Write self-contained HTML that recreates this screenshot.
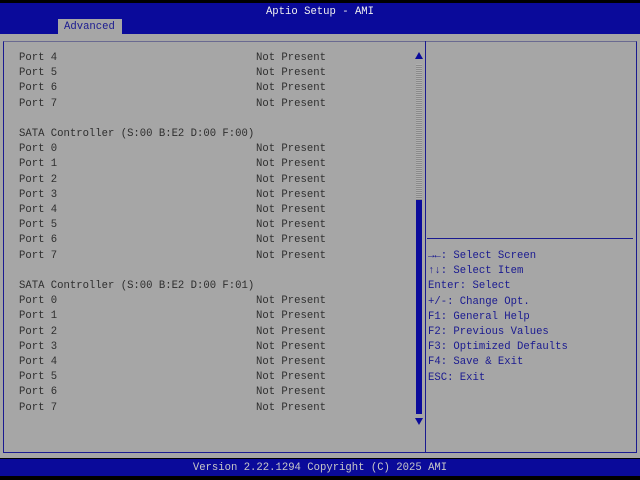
<!DOCTYPE html>
<html><head><style>
body{margin:0;width:640px;height:480px;background:#000;position:relative;overflow:hidden;font-family:"Liberation Mono","DejaVu Sans Mono",monospace;font-size:10.6px;}
div{position:absolute;}
.t{white-space:pre;line-height:12px;}
.l{color:#2e2e2e;}
.h{color:#1a1a90;}
</style></head><body>
<div style="left:0;top:3px;width:640px;height:31px;background:#0a0a9a"></div>
<div class="t" style="left:0;top:6px;width:640px;text-align:center;color:#f0f0f0">Aptio Setup - AMI</div>
<div style="left:58px;top:19px;width:64px;height:15px;background:#a6a6a6"></div>
<div class="t" style="left:64px;top:21px;color:#1a1a90">Advanced</div>
<div style="left:0;top:34px;width:640px;height:424px;background:#a6a6a6"></div>
<div style="left:3px;top:41px;width:632px;height:410px;border:1px solid #1a1a90;border-top-color:#6a6a90"></div>
<div style="left:425px;top:41px;width:1px;height:411px;background:#1a1a90"></div>
<div style="left:427px;top:238px;width:206px;height:1px;background:#1a1a90"></div>
<div style="left:416px;top:64px;width:6px;height:136px;background:repeating-linear-gradient(0deg,#8a8a8a 0 1px,#b0b0b0 1px 2px)"></div>
<div style="left:416px;top:200px;width:6px;height:214px;background:#0a0a9a"></div>
<div style="left:415px;top:52px;width:0;height:0;border-left:4px solid transparent;border-right:4px solid transparent;border-bottom:7px solid #0a0a9a"></div>
<div style="left:415px;top:418px;width:0;height:0;border-left:4px solid transparent;border-right:4px solid transparent;border-top:7px solid #0a0a9a"></div>
<div class="t l" style="left:19px;top:51px;line-height:15.2px">Port 4
Port 5
Port 6
Port 7

SATA Controller (S:00 B:E2 D:00 F:00)
Port 0
Port 1
Port 2
Port 3
Port 4
Port 5
Port 6
Port 7

SATA Controller (S:00 B:E2 D:00 F:01)
Port 0
Port 1
Port 2
Port 3
Port 4
Port 5
Port 6
Port 7</div>
<div class="t l" style="left:256px;top:51px;line-height:15.2px">Not Present
Not Present
Not Present
Not Present


Not Present
Not Present
Not Present
Not Present
Not Present
Not Present
Not Present
Not Present


Not Present
Not Present
Not Present
Not Present
Not Present
Not Present
Not Present
Not Present</div>
<div class="t h" style="left:428px;top:249px;line-height:15.2px">&#8594;&#8592;: Select Screen
&#8593;&#8595;: Select Item
Enter: Select
+/-: Change Opt.
F1: General Help
F2: Previous Values
F3: Optimized Defaults
F4: Save &amp; Exit
ESC: Exit</div>
<div style="left:0;top:459px;width:640px;height:17px;background:#0a0a9a"></div>
<div class="t" style="left:0;top:462px;width:640px;text-align:center;color:#c8c8c8">Version 2.22.1294 Copyright (C) 2025 AMI</div>
</body></html>
